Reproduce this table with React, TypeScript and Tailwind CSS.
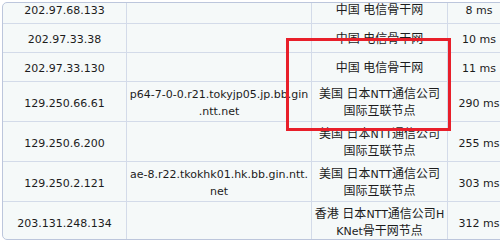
import React from 'react';

interface Hop {
  ip: string;
  host?: string[];
  place: string[];
  time: string;
}

const hops: Hop[] = [
  { ip: '202.97.68.133', place: ['中国 电信骨干网'], time: '8 ms' },
  { ip: '202.97.33.38', place: ['中国 电信骨干网'], time: '10 ms' },
  { ip: '202.97.33.130', place: ['中国 电信骨干网'], time: '11 ms' },
  {
    ip: '129.250.66.61',
    host: ['p64-7-0-0.r21.tokyjp05.jp.bb.gin', '.ntt.net'],
    place: ['美国 日本NTT通信公司', '国际互联节点'],
    time: '290 ms',
  },
  { ip: '129.250.6.200', place: ['美国 日本NTT通信公司', '国际互联节点'], time: '255 ms' },
  {
    ip: '129.250.2.121',
    host: ['ae-8.r22.tkokhk01.hk.bb.gin.ntt.', 'net'],
    place: ['美国 日本NTT通信公司', '国际互联节点'],
    time: '303 ms',
  },
  { ip: '203.131.248.134', place: ['香港 日本NTT通信公司H', 'KNet骨干网节点'], time: '312 ms' },
];

// CJK runs a touch larger than the latin text, like the original page
const Mixed = ({ text }: { text: string }) => (
  <>
    {text.split(/([\u4e00-\u9fff]+)/).map((part, i) =>
      /[\u4e00-\u9fff]/.test(part) ? (
        <span key={i} className="text-[12px]">{part}</span>
      ) : (
        <span key={i}>{part}</span>
      )
    )}
  </>
);

const Lines = ({ lines }: { lines: string[] }) => (
  <div className="flex flex-col items-center whitespace-nowrap">
    {lines.map((l, i) => (
      <span key={i}>
        <Mixed text={l} />
      </span>
    ))}
  </div>
);

export default function App() {
  return (
    <div className="relative w-[500px] h-[240px] overflow-hidden bg-white">
      <div
        className="ml-[2px] mt-[2px] w-[509px] h-[238px] overflow-hidden rounded-[5px] border border-[#bcc6dc] bg-[#f5f9f9] text-[11px] leading-[17px] text-[#1c1c1c]"
        style={{ fontFamily: "'DejaVu Sans', 'Noto Sans CJK SC', sans-serif" }}
      >
        <div className="mt-[-8px]">
          {hops.map((h, i) => {
            const tall = h.place.length > 1;
            return (
              <div
                key={i}
                className={`flex border-b border-[#d3dbe9] ${tall ? 'h-[40px]' : 'h-[29px]'}`}
              >
                <div className="w-[124px] shrink-0 flex items-center justify-center pt-[3px] border-r border-[#d3dbe9]">
                  {h.ip}
                </div>
                <div className="w-[185px] shrink-0 flex items-center justify-center pt-[3px] border-r border-[#d3dbe9]">
                  {h.host && <Lines lines={h.host} />}
                </div>
                <div className="w-[136px] shrink-0 flex items-center justify-center pt-[3px] border-r border-[#d3dbe9]">
                  <Lines lines={h.place} />
                </div>
                <div className="flex-1 flex items-center justify-center pt-[3px] whitespace-nowrap">
                  {h.time}
                </div>
              </div>
            );
          })}
        </div>
      </div>
      {/* red highlight box drawn over the table */}
      <div className="absolute left-[286px] top-[38px] w-[165px] h-[93px] border-[3px] border-[#e81f2a] pointer-events-none" />
    </div>
  );
}
